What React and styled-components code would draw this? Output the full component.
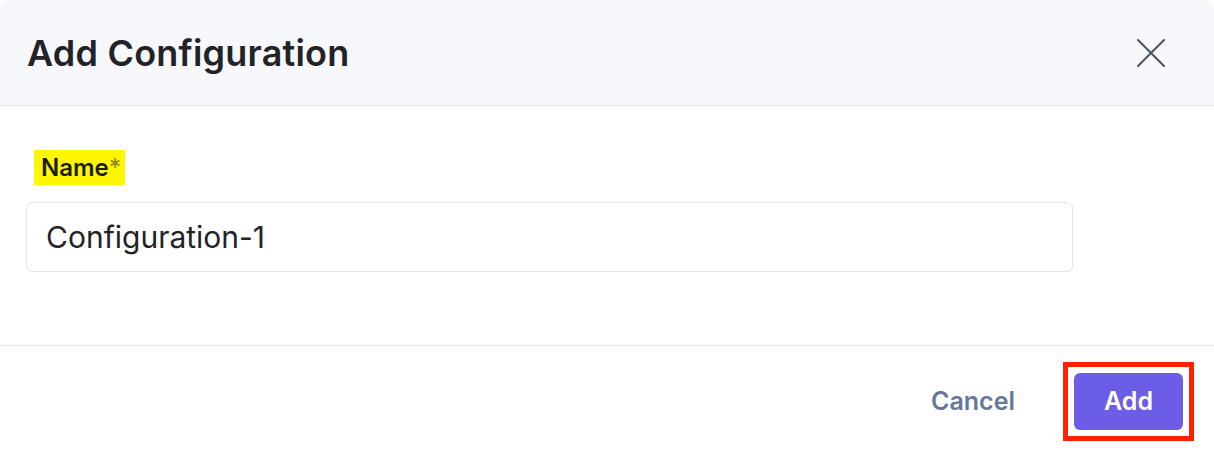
import React, { useState } from 'react';
import styled, { createGlobalStyle } from 'styled-components';

const GlobalStyle = createGlobalStyle`
  html, body {
    margin: 0;
    padding: 0;
    background: #ffffff;
  }
  body {
    font-family: Inter, "Noto Sans", "Liberation Sans", sans-serif;
    color: #222326;
  }
`;

const Dialog = styled.div`
  width: 1214px;
  height: 454px;
  display: flex;
  flex-direction: column;
  background: #ffffff;
  border-radius: 8px 8px 0 0;
  overflow: hidden;
`;

const Header = styled.div`
  height: 106px;
  flex-shrink: 0;
  display: flex;
  align-items: center;
  justify-content: space-between;
  padding: 0 43px 0 27px;
  background: #f7f8fc;
  border-bottom: 1px solid #e1e3ee;
  box-sizing: border-box;
`;

const Title = styled.h2`
  margin: 0;
  font-size: 36px;
  font-weight: 600;
  color: #222326;
  letter-spacing: 0.2px;
`;

const CloseButton = styled.button`
  width: 40px;
  height: 40px;
  padding: 0;
  border: none;
  background: transparent;
  display: flex;
  align-items: center;
  justify-content: center;
  cursor: pointer;
  color: #4b5262;
`;

const Body = styled.div`
  height: 240px;
  flex-shrink: 0;
  padding: 44px 140px 0 26px;
  box-sizing: border-box;
  border-bottom: 1px solid #e1e3ee;
  display: flex;
  flex-direction: column;
  gap: 17px;
`;

const Label = styled.label`
  align-self: flex-start;
  margin-left: 8px;
  padding: 0 4px 0 7px;
  height: 35px;
  display: flex;
  align-items: center;
  background: #fff700;
  font-size: 24px;
  font-weight: 600;
  color: #1c1c12;
`;

const Required = styled.span`
  color: #8f8c1e;
  font-weight: 500;
`;

const TextInput = styled.input`
  width: 1047px;
  height: 70px;
  box-sizing: border-box;
  padding: 0 19px;
  border: 1px solid #dfe3ef;
  border-radius: 6px;
  font-family: inherit;
  font-size: 30px;
  color: #222326;
  background: #ffffff;
  &:focus {
    outline: none;
    border-color: #6c5ce7;
  }
`;

const Footer = styled.div`
  flex: 1;
  display: flex;
  align-items: center;
  justify-content: flex-end;
  gap: 48px;
  padding: 2px 20px 0 0;
`;

const TextButton = styled.button`
  border: none;
  background: transparent;
  padding: 0;
  font-family: inherit;
  font-size: 25px;
  font-weight: 600;
  color: #66789a;
  cursor: pointer;
`;

const HighlightFrame = styled.span`
  display: flex;
  padding: 6px;
  border: 5px solid #ff2200;
`;

const PrimaryButton = styled.button`
  width: 109px;
  height: 57px;
  border: none;
  border-radius: 6px;
  background: #6b5de6;
  color: #ffffff;
  font-family: inherit;
  font-size: 25px;
  font-weight: 600;
  cursor: pointer;
`;

export default function App() {
  const [name, setName] = useState('Configuration-1');

  return (
    <>
      <GlobalStyle />
      <Dialog>
        <Header>
          <Title>Add Configuration</Title>
          <CloseButton aria-label="Close">
            <svg width="28" height="28" viewBox="0 0 28 28" fill="none" stroke="currentColor" strokeWidth="2" strokeLinecap="round">
              <path d="M1 1L27 27M27 1L1 27" />
            </svg>
          </CloseButton>
        </Header>
        <Body>
          <Label htmlFor="name">
            Name<Required>*</Required>
          </Label>
          <TextInput id="name" value={name} onChange={e => setName(e.target.value)} />
        </Body>
        <Footer>
          <TextButton>Cancel</TextButton>
          <HighlightFrame>
            <PrimaryButton>Add</PrimaryButton>
          </HighlightFrame>
        </Footer>
      </Dialog>
    </>
  );
}
